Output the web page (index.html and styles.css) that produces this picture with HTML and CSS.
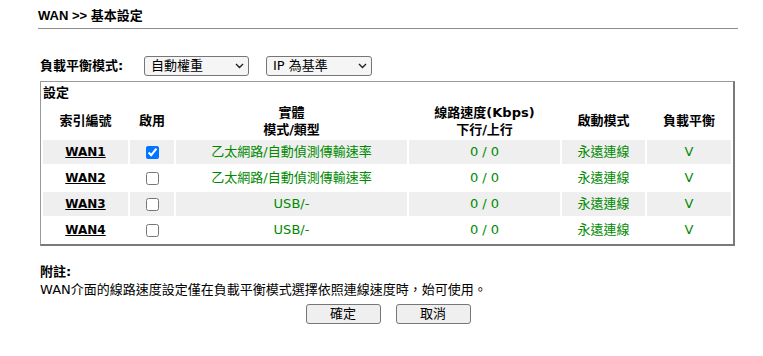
FILE: index.html
```html
<!DOCTYPE html>
<html lang="zh-Hant">
<head>
<meta charset="utf-8">
<title>WAN >> 基本設定</title>
<link rel="stylesheet" href="styles.css">
</head>
<body>
<div class="page">
  <div class="title">WAN &gt;&gt; 基本設定</div>
  <div class="rule"></div>

  <div class="mode-row">
    <span class="label">負載平衡模式:</span>
    <span class="sel sel-1">
      <select><option>自動權重</option></select>
      <svg class="chev" width="9" height="6" viewBox="0 0 9 6"><path d="M1 1 L4.5 4.5 L8 1" fill="none" stroke="#222" stroke-width="1.4"/></svg>
    </span>
    <span class="sel sel-2">
      <select><option>IP 為基準</option></select>
      <svg class="chev" width="9" height="6" viewBox="0 0 9 6"><path d="M1 1 L4.5 4.5 L8 1" fill="none" stroke="#222" stroke-width="1.4"/></svg>
    </span>
  </div>

  <table class="wan">
    <colgroup>
      <col class="c1"><col class="c2"><col class="c3"><col class="c4"><col class="c5"><col class="c6">
    </colgroup>
    <tr class="cap"><td colspan="6">設定</td></tr>
    <tr class="head">
      <th>索引編號</th>
      <th>啟用</th>
      <th>實體<br>模式/類型</th>
      <th>線路速度(Kbps)<br>下行/上行</th>
      <th>啟動模式</th>
      <th>負載平衡</th>
    </tr>
    <tr class="row gray">
      <td><a class="wan-link" href="#">WAN1</a></td>
      <td><input type="checkbox" checked></td>
      <td class="green">乙太網路/自動偵測傳輸速率</td>
      <td class="green">0 / 0</td>
      <td class="green">永遠連線</td>
      <td class="green">V</td>
    </tr>
    <tr class="row">
      <td><a class="wan-link" href="#">WAN2</a></td>
      <td><input type="checkbox"></td>
      <td class="green">乙太網路/自動偵測傳輸速率</td>
      <td class="green">0 / 0</td>
      <td class="green">永遠連線</td>
      <td class="green">V</td>
    </tr>
    <tr class="row gray">
      <td><a class="wan-link" href="#">WAN3</a></td>
      <td><input type="checkbox"></td>
      <td class="green">USB/-</td>
      <td class="green">0 / 0</td>
      <td class="green">永遠連線</td>
      <td class="green">V</td>
    </tr>
    <tr class="row">
      <td><a class="wan-link" href="#">WAN4</a></td>
      <td><input type="checkbox"></td>
      <td class="green">USB/-</td>
      <td class="green">0 / 0</td>
      <td class="green">永遠連線</td>
      <td class="green">V</td>
    </tr>
  </table>

  <div class="note-title">附註:</div>
  <div class="note-text">WAN介面的線路速度設定僅在負載平衡模式選擇依照連線速度時，始可使用。</div>

  <div class="actions">
    <button class="btn" type="button">確定</button>
    <button class="btn" type="button">取消</button>
  </div>
</div>
</body>
</html>
```

FILE: styles.css
```css
* { box-sizing: border-box; }

body {
  margin: 0;
  background: #fff;
  color: #000;
  font-family: "DejaVu Sans", "Noto Sans CJK TC", sans-serif;
  font-size: 13px;
}

.page {
  width: 700px;
  margin-left: 38px;
  padding-top: 8px;
}

.title {
  font-family: "Liberation Sans", "Noto Sans CJK TC", sans-serif;
  font-weight: bold;
  font-size: 13px;
  line-height: 16px;
  height: 20px;
}

.rule {
  height: 1px;
  background: #8c8c8c;
}

.mode-row {
  display: flex;
  align-items: center;
  height: 20px;
  margin-top: 27px;
  padding-left: 2px;
}

.label {
  width: 104px;
  font-weight: bold;
  line-height: 20px;
}

.sel {
  position: relative;
  display: inline-block;
  height: 20px;
}

.sel-1 { width: 105px; margin-right: 17px; }
.sel-2 { width: 106px; }

.sel select {
  appearance: none;
  -webkit-appearance: none;
  width: 100%;
  height: 20px;
  margin: 0;
  padding: 0 0 0 6px;
  border: 1px solid #767676;
  border-radius: 3px;
  background: #f5f5f5;
  color: #000;
  font-family: "DejaVu Sans", "Noto Sans CJK TC", sans-serif;
  font-size: 13px;
  line-height: 18px;
}

.chev {
  position: absolute;
  right: 5px;
  top: 7px;
  pointer-events: none;
}

.wan {
  margin-top: 5px;
  margin-left: 2px;
  width: 695px;
  table-layout: fixed;
  border-collapse: separate;
  border-spacing: 2px;
  border-top: 1px solid #9a9a9a;
  border-left: 1px solid #9a9a9a;
  border-right: 2px solid #7a7a7a;
  border-bottom: 2px solid #7a7a7a;
}

.c1 { width: 85px; }
.c2 { width: 44px; }
.c3 { width: 231px; }
.c4 { width: 151px; }
.c5 { width: 83px; }
.c6 { width: 84px; }

.wan td,
.wan th {
  padding: 0;
  text-align: center;
  vertical-align: middle;
}

.cap td {
  height: 17px;
  line-height: 17px;
  text-align: left;
  font-weight: bold;
}

.head th {
  height: 35px;
  line-height: 17px;
  font-weight: bold;
}

.row td {
  height: 24px;
  line-height: 16px;
}

.gray td { background: #efefef; }

.green { color: #008a00; }

.wan-link {
  color: #000;
  font-weight: bold;
  font-size: 12px;
  text-decoration: underline;
}

.row input[type="checkbox"] {
  margin: 0;
  width: 13px;
  height: 13px;
  vertical-align: middle;
}

.note-title {
  margin-top: 17px;
  padding-left: 2px;
  font-weight: bold;
  line-height: 18px;
}

.note-text {
  padding-left: 2px;
  line-height: 18px;
}

.actions {
  display: flex;
  justify-content: center;
  gap: 15px;
  margin-top: 5px;
}

.btn {
  width: 75px;
  height: 20px;
  margin: 0;
  padding: 0;
  border: 1px solid #767676;
  border-radius: 3px;
  background: #efefef;
  color: #000;
  font-family: "DejaVu Sans", "Noto Sans CJK TC", sans-serif;
  font-size: 13px;
  line-height: 18px;
}
```
